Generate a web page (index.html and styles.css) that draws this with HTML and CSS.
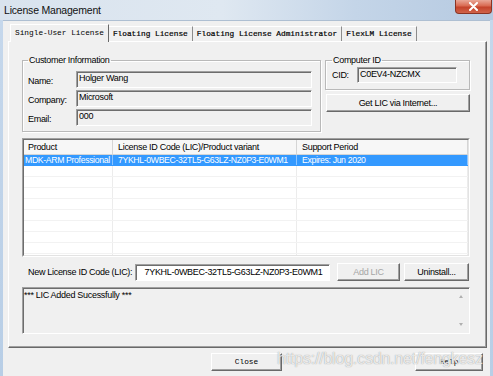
FILE: index.html
```html
<!DOCTYPE html>
<html lang="en">
  <head>
    <meta charset="UTF-8" />
    <title>License Management</title>
    <link rel="stylesheet" href="styles.css">
  </head>
  <body>
    <div class="window">
      <div class="titlebar">
        <span class="title">License Management</span>
        <span class="close-btn">
          <svg width="11" height="9" viewBox="0 0 11 9">
            <path d="M2 1 L9 8 M9 1 L2 8" stroke="#fff" stroke-width="2" stroke-linecap="round" fill="none"/>
          </svg>
        </span>
      </div>

      <div class="client">
        <div class="tabs">
          <div class="tab active">Single-User License</div>
          <div class="tab">Floating License</div>
          <div class="tab">Floating License Administrator</div>
          <div class="tab">FlexLM License</div>
        </div>

        <div class="panel">
          <div class="top-row">
            <fieldset class="group customer">
              <legend>Customer Information</legend>
              <div class="field-row">
                <span class="label">Name:</span>
                <div class="field">Holger Wang</div>
              </div>
              <div class="field-row">
                <span class="label">Company:</span>
                <div class="field">Microsoft</div>
              </div>
              <div class="field-row">
                <span class="label">Email:</span>
                <div class="field">000</div>
              </div>
            </fieldset>

            <div class="right-col">
              <fieldset class="group computer">
                <legend>Computer ID</legend>
                <div class="field-row">
                  <span class="label cid-label">CID:</span>
                  <div class="field cid">C0EV4-NZCMX</div>
                </div>
              </fieldset>
              <button class="btn get-lic">Get LIC via Internet...</button>
            </div>
          </div>

          <div class="list">
            <div class="list-inner">
              <div class="list-row list-head">
                <div class="cell">Product</div>
                <div class="cell">License ID Code (LIC)/Product variant</div>
                <div class="cell">Support Period</div>
              </div>
              <div class="list-row selected">
                <div class="cell">MDK-ARM Professional</div>
                <div class="cell">7YKHL-0WBEC-32TL5-G63LZ-NZ0P3-E0WM1</div>
                <div class="cell">Expires: Jun 2020</div>
              </div>
              <div class="list-row"><div class="cell"></div><div class="cell"></div><div class="cell"></div></div>
              <div class="list-row"><div class="cell"></div><div class="cell"></div><div class="cell"></div></div>
              <div class="list-row"><div class="cell"></div><div class="cell"></div><div class="cell"></div></div>
              <div class="list-row"><div class="cell"></div><div class="cell"></div><div class="cell"></div></div>
              <div class="list-row"><div class="cell"></div><div class="cell"></div><div class="cell"></div></div>
              <div class="list-row"><div class="cell"></div><div class="cell"></div><div class="cell"></div></div>
              <div class="list-row"><div class="cell"></div><div class="cell"></div><div class="cell"></div></div>
              <div class="list-row"><div class="cell"></div><div class="cell"></div><div class="cell"></div></div>
              <div class="list-row"><div class="cell"></div><div class="cell"></div><div class="cell"></div></div>
            </div>
          </div>

          <div class="lic-row">
            <span class="lic-label">New License ID Code (LIC):</span>
            <div class="field lic-field">7YKHL-0WBEC-32TL5-G63LZ-NZ0P3-E0WM1</div>
            <button class="btn add-lic" disabled>Add LIC</button>
            <button class="btn uninstall">Uninstall...</button>
          </div>

          <div class="output">
            <div class="output-text">*** LIC Added Sucessfully ***</div>
            <div class="scroll">
              <span class="arrow up"></span>
              <span class="arrow down"></span>
            </div>
          </div>
        </div>

        <div class="footer">
          <button class="btn mono close">Close</button>
          <button class="btn mono help">Help</button>
        </div>
      </div>

      <div class="watermark">https://blog.csdn.net/fengkesz</div>
    </div>
  </body>
</html>
```

FILE: styles.css
```css
* {
  box-sizing: border-box;
}

body {
  margin: 0;
  width: 493px;
  height: 376px;
  overflow: hidden;
  font-family: "Liberation Sans", Arial, sans-serif;
  font-size: 9px;
  letter-spacing: -0.3px;
  color: #000;
}

.window {
  position: relative;
  height: 376px;
  display: flex;
  flex-direction: column;
  padding: 0 3px;
  background: linear-gradient(180deg, #c6d8ec, #b8cee6);
}

/* title bar */
.titlebar {
  height: 20px;
  margin: 0 -3px;
  padding-left: 4px;
  display: flex;
  justify-content: space-between;
  align-items: flex-start;
  background: linear-gradient(90deg, #d9e3ee 0%, #dfe8f1 45%, #c4d5e8 72%, #b6cae1 100%);
}

.title {
  font-size: 10.5px;
  letter-spacing: -0.2px;
  line-height: 20px;
  color: #111;
}

.close-btn {
  width: 37px;
  height: 14px;
  margin-right: 1px;
  display: flex;
  align-items: center;
  justify-content: center;
  border: 1px solid #8a3424;
  border-top: none;
  border-radius: 0 0 4px 4px;
  background: linear-gradient(180deg, #e9a797 0%, #d96a52 45%, #c4432b 55%, #d0634a 100%);
}

/* client area */
.client {
  flex: 1;
  display: flex;
  flex-direction: column;
  background: #f0f0f0;
  border-top: 1px solid #aebfd2;
}

.tabs {
  display: flex;
  align-items: flex-end;
  margin-left: 7px;
  padding-top: 3px;
  font-family: "Liberation Mono", "Courier New", monospace;
  font-size: 7.8px;
  letter-spacing: 0;
}

.tab {
  height: 15px;
  padding: 0 4px;
  line-height: 14px;
  border-top: 1px solid #fff;
  border-right: 1px solid #8c8c8c;
  white-space: nowrap;
  -webkit-text-stroke: 0.2px #000;
}

.tab.active {
  height: 18px;
  line-height: 16px;
  margin-bottom: -1px;
  position: relative;
  z-index: 1;
  background: #f0f0f0;
  border-left: 1px solid #fff;
  border-right: 1px solid #696969;
  -webkit-text-stroke: 0;
}

.panel {
  margin: 0 3px 0 5px;
  padding: 13px 16px 13px 13px;
  border: 1px solid;
  border-color: #fff #696969 #696969 #fff;
  box-shadow: inset -1px -1px #a0a0a0;
}

/* group boxes */
.top-row {
  display: flex;
  gap: 4px;
  align-items: flex-start;
}

.group {
  margin: 0;
  padding: 6px 8px 5px 5px;
  border: 1px solid #b9b9b9;
  box-shadow: 1px 1px 0 #fff, inset 1px 1px 0 #fff;
}

.group legend {
  padding: 0 1px;
  line-height: 10px;
}

.customer {
  width: 300px;
}

.field-row {
  display: flex;
  align-items: center;
  margin-bottom: 2px;
}

.field-row:last-child {
  margin-bottom: 0;
}

.label {
  width: 48px;
  padding-top: 3px;
}

.field {
  flex: 1;
  height: 17px;
  padding: 0 0 0 2px;
  line-height: 12px;
  background: #f0f0f0;
  border: 1px solid;
  border-color: #a0a0a0 #fff #fff #a0a0a0;
  box-shadow: inset 1px 1px #6d6d6d;
  white-space: nowrap;
}

.right-col {
  width: 145px;
  display: flex;
  flex-direction: column;
}

.computer {
  padding: 2px 12px 6px 6px;
}

.cid-label {
  width: 25px;
  padding-top: 0;
}

.field.cid {
  flex: none;
  width: 100px;
  height: 16px;
}

/* buttons */
.btn {
  height: 18px;
  padding: 0;
  font: inherit;
  letter-spacing: inherit;
  color: #000;
  background: #f0f0f0;
  border: 1px solid;
  border-color: #fff #696969 #696969 #fff;
  box-shadow: inset -1px -1px #a0a0a0;
}

.get-lic {
  margin: 4px 0 0 1px;
  width: 144px;
}

.btn:disabled {
  color: #a6a6a6;
}

.btn.mono {
  font-family: "Liberation Mono", "Courier New", monospace;
  font-size: 7.8px;
  letter-spacing: 0;
}

/* license list */
.list {
  margin-top: 6px;
  height: 119px;
  border: 1px solid;
  border-color: #a0a0a0 #fff #fff #a0a0a0;
}

.list-inner {
  height: 100%;
  overflow: hidden;
  background: #fff;
  border: 1px solid;
  border-color: #6d6d6d #e3e3e3 #e3e3e3 #6d6d6d;
}

.list-row {
  display: grid;
  grid-template-columns: 89px 184px 1fr;
  height: 11px;
  line-height: 10px;
  font-size: 8.7px;
  letter-spacing: -0.35px;
  border-bottom: 1px solid #f2f2f2;
}

.cell {
  padding-left: 5px;
  white-space: nowrap;
  overflow: hidden;
  border-right: 1px solid #ececec;
}

.cell:first-child {
  padding-left: 1px;
}

.list-head {
  height: 15px;
  line-height: 14px;
  font-size: 9px;
  letter-spacing: -0.3px;
  background: #f7f7f7;
  border-bottom: 1px solid #d5d5d5;
}

.list-head .cell {
  border-right-color: #d5d5d5;
}

.list-head .cell:first-child {
  padding-left: 4px;
}

.list-row.selected {
  background: #3399ff;
  color: #fff;
  border-bottom-color: #3399ff;
}

.list-row.selected .cell {
  border-right-color: #8cc4ff;
}

/* new LIC row */
.lic-row {
  display: flex;
  align-items: center;
  margin-top: 6px;
  padding-left: 6px;
}

.lic-label {
  width: 107px;
}

.field.lic-field {
  flex: none;
  width: 195px;
  height: 17px;
  line-height: 14px;
  text-align: center;
  background: #fff;
}

.add-lic {
  width: 63px;
  margin-left: 7px;
}

.uninstall {
  width: 65px;
  margin-left: 4px;
}

/* output box */
.output {
  margin-top: 6px;
  height: 47px;
  display: flex;
  border: 1px solid;
  border-color: #a0a0a0 #fff #fff #a0a0a0;
  box-shadow: inset 1px 1px #6d6d6d;
}

.output-text {
  flex: 1;
  padding: 2px 0 0 1px;
  line-height: 10px;
}

.scroll {
  width: 16px;
  display: flex;
  flex-direction: column;
  justify-content: space-between;
  align-items: center;
  padding: 7px 0 7px;
}

.arrow {
  width: 0;
  height: 0;
  border-left: 2.5px solid transparent;
  border-right: 2.5px solid transparent;
}

.arrow.up {
  border-bottom: 3px solid #b0b0b0;
}

.arrow.down {
  border-top: 3px solid #b0b0b0;
}

/* footer buttons */
.footer {
  display: flex;
  justify-content: flex-end;
  gap: 133px;
  margin-top: 5px;
  padding-right: 7px;
}

.close {
  width: 71px;
}

.help {
  width: 68px;
}

.watermark {
  position: absolute;
  left: 277px;
  top: 349px;
  font-size: 16px;
  line-height: 20px;
  letter-spacing: -0.2px;
  color: rgba(255, 255, 255, 0.8);
  text-shadow: 0 0 1px rgba(90, 90, 90, 0.7);
}
```
